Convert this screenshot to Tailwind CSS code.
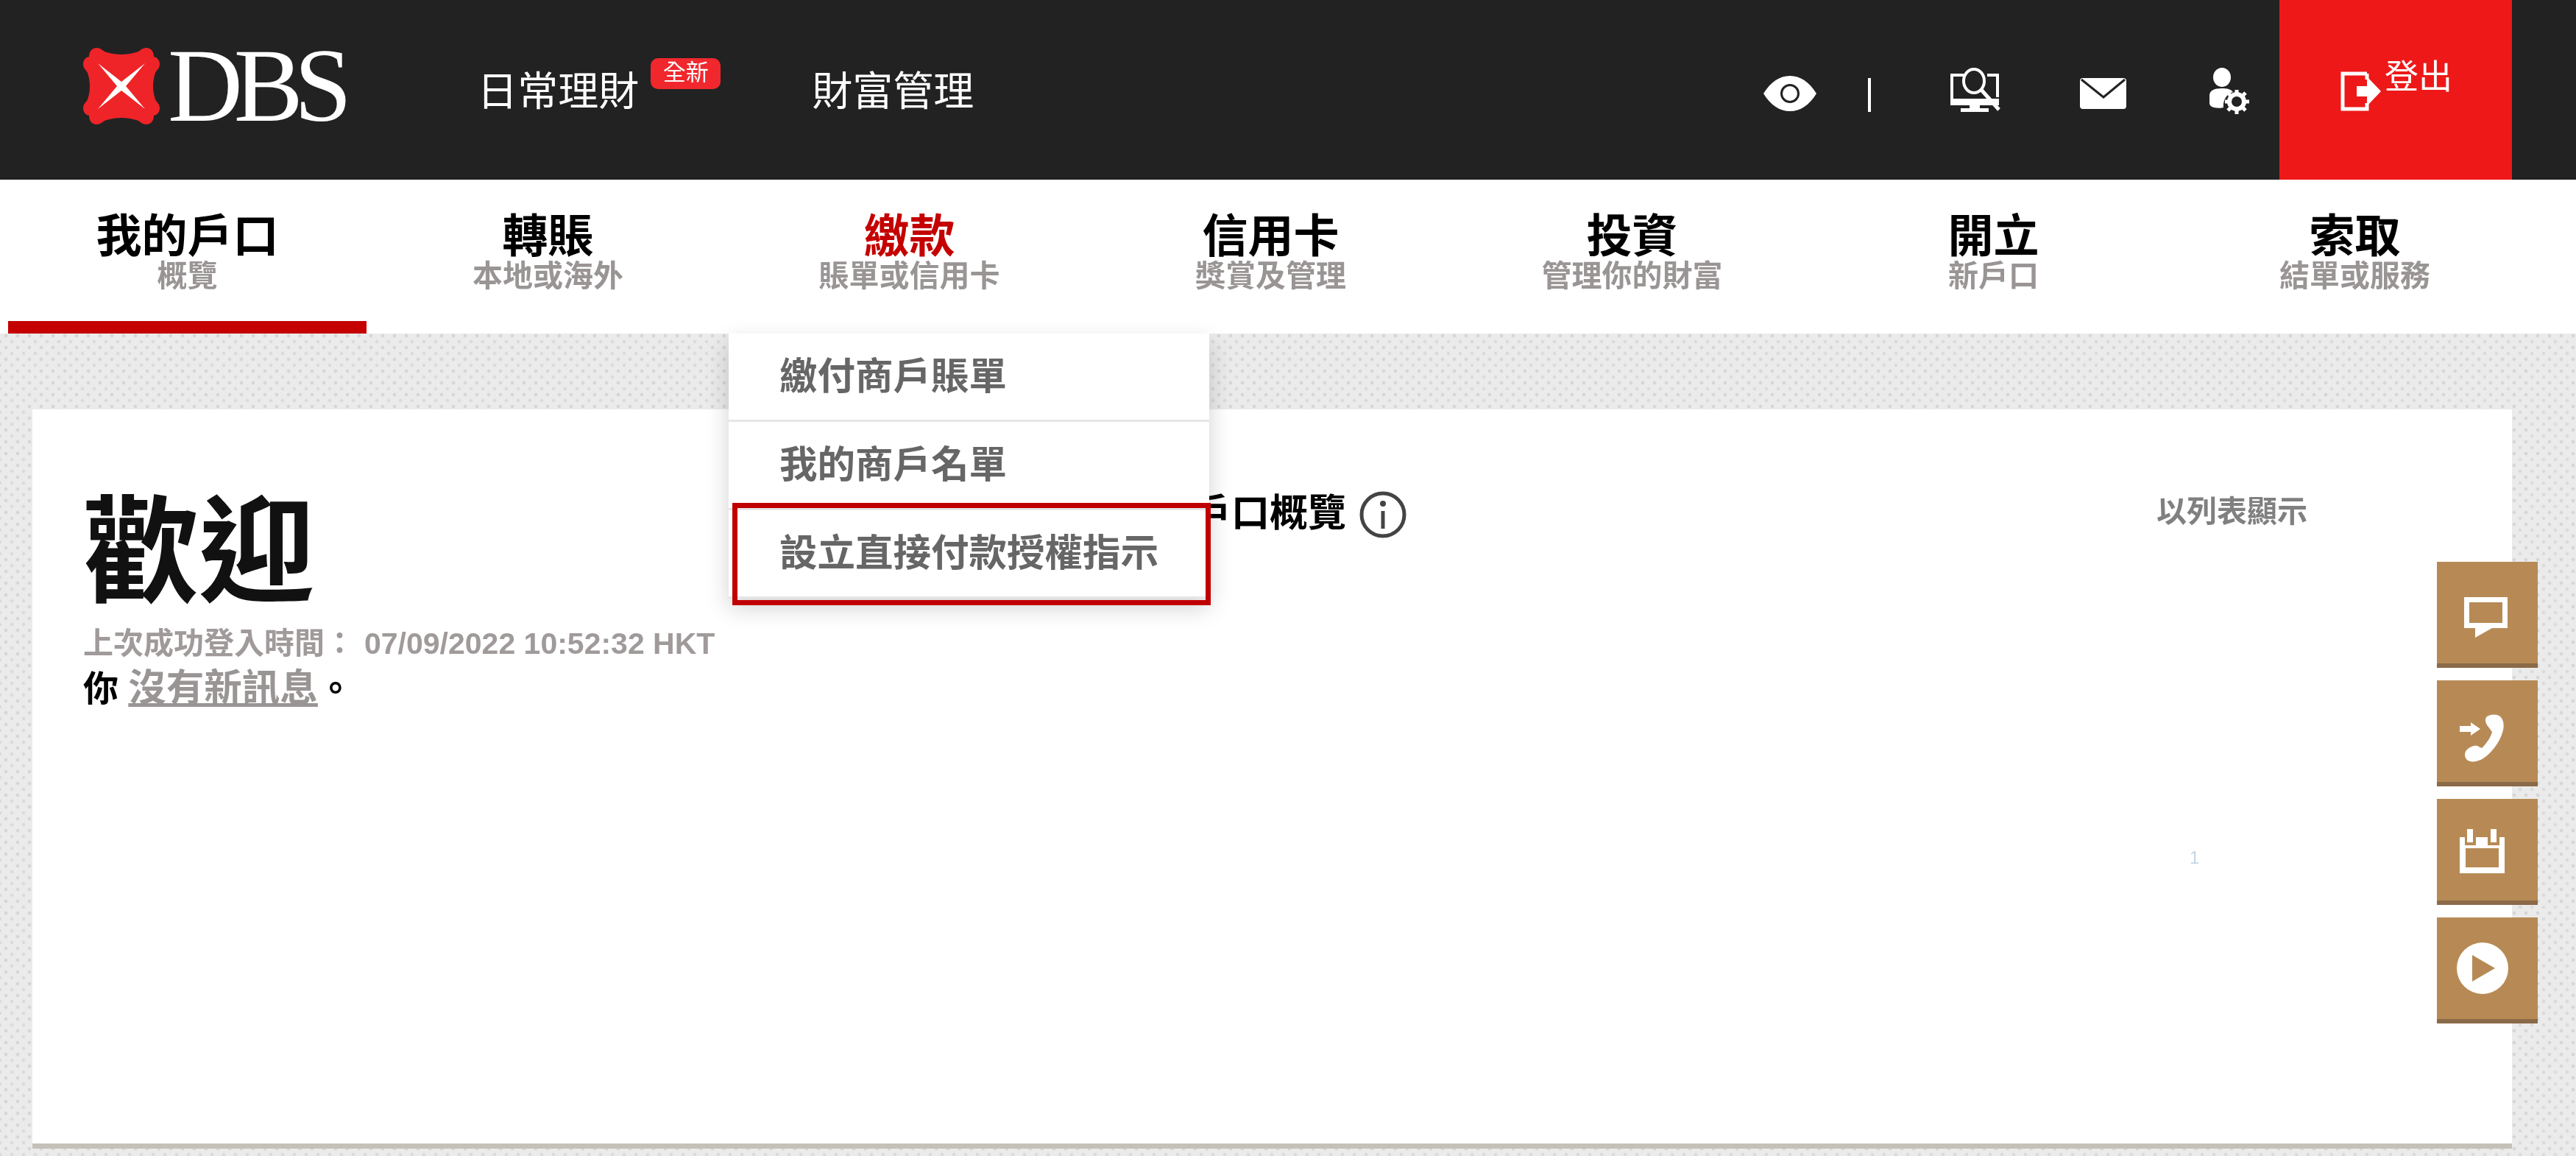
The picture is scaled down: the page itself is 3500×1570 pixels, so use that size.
<!DOCTYPE html>
<html lang="zh-Hant">
<head>
  <meta charset="UTF-8">
  <title>DBS</title>
  <script src="https://cdn.jsdelivr.net/npm/@tailwindcss/browser@4"></script>
</head>
<body class="font-['Liberation_Sans','Noto_Sans_CJK_TC',sans-serif]">
<div class="relative w-[3500px] h-[1570px] overflow-hidden flex flex-col bg-[#ebebeb] bg-[radial-gradient(#d5d5d5_1.5px,transparent_3px),radial-gradient(#dadada_1.5px,transparent_3px)] bg-[length:16px_16px] bg-[position:0_0,8px_8px] blur-[0.7px]">

  <!-- Top bar -->
  <header class="h-[244px] shrink-0 bg-[#222222] flex items-stretch text-white">
    <a class="ml-[113px] mt-[65px] h-[104px] flex items-start">
      <svg class="w-[104px] h-[104px]" viewBox="0 0 104 104">
        <path fill="#ee2428" d="M18 0c7 0 9 5 14 6 13 4 27 4 40 0 5-1 7-6 14-6 6 0 10 5 10 12 5 1 8 5 8 10 0 6-4 8-6 12-4 12-4 24 0 36 2 4 6 6 6 12 0 5-3 9-8 10 0 7-4 12-10 12-7 0-9-5-14-6-13-4-27-4-40 0-5 1-7 6-14 6-6 0-10-5-10-12-5-1-8-5-8-10 0-6 4-8 6-12 4-12 4-24 0-36-2-4-6-6-6-12 0-5 3-9 8-10 0-7 4-12 10-12z"/>
        <path fill="#fff" d="M20 21 52 46 84 21 58 52 84 83 52 58 20 83 46 52z"/>
      </svg>
      <span class="ml-[11px] mt-[-24px] font-['Liberation_Serif',serif] text-[141px] leading-[150px] tracking-[-12px]">DBS</span>
    </a>
    <nav class="flex items-start text-[55px] leading-[60px]">
      <a class="ml-[182px] mt-[94px]">日常理財</a>
      <span class="ml-[16px] mt-[79px] w-[95px] h-[42px] rounded-[10px] bg-[#f0282d] text-[31px] leading-[40px] text-center">全新</span>
      <a class="ml-[124px] mt-[94px]">財富管理</a>
    </nav>
    <div class="ml-auto flex items-start">
      <!-- eye -->
      <svg class="mt-[103px] w-[72px] h-[48px]" viewBox="0 0 72 48">
        <path fill="#fff" fill-rule="evenodd" d="M0 24C10 8 22 0 36 0s26 8 36 24C62 40 50 48 36 48S10 40 0 24zM36 11a13 13 0 1 0 0 26a13 13 0 0 0 0-26z"/>
        <circle cx="36" cy="24" r="10" fill="#fff"/>
      </svg>
      <div class="ml-[70px] mt-[106px] w-[4px] h-[46px] bg-white"></div>
      <!-- monitor search -->
      <svg class="ml-[108px] mt-[92px] w-[69px] h-[60px]" viewBox="0 0 69 60" fill="none">
        <path stroke="#fff" stroke-width="4" d="M18 10H2v34h48M50 10h14v30"/>
        <path fill="#fff" d="M0 42h66v9H0zM26 51h14v4H26zM14 55h38v5H14z"/>
        <ellipse cx="32" cy="18" rx="14" ry="16" stroke="#fff" stroke-width="4"/>
        <path stroke="#fff" stroke-width="5" d="M42 30l24 27"/>
      </svg>
      <!-- mail -->
      <svg class="ml-[107px] mt-[106px] w-[63px] h-[42px]" viewBox="0 0 63 42">
        <rect width="63" height="42" rx="4" fill="#fff"/>
        <path d="M2 2l30 24L61 2" fill="none" stroke="#222" stroke-width="3"/>
      </svg>
      <!-- user settings -->
      <svg class="ml-[111px] mt-[92px] w-[56px] h-[63px]" viewBox="0 0 56 63">
        <ellipse cx="19" cy="13" rx="12" ry="13" fill="#fff"/>
        <path fill="#fff" d="M2 38c0-7 6-10 17-10 7 0 12 1 15 5-9 3-14 11-13 21-3 1-8 1-13 0-4-1-6-3-6-6z"/>
        <circle cx="39" cy="46" r="10" fill="none" stroke="#fff" stroke-width="6"/>
        <path stroke="#fff" stroke-width="5" d="M39 30v7M39 55v8M23 46h7M48 46h8M27 34l6 6M45 52l6 6M51 34l-6 6M33 52l-6 6"/>
      </svg>
      <!-- logout -->
      <a class="self-stretch ml-[41px] mr-[87px] w-[316px] bg-[#ee1818] flex items-start pl-[83px]">
        <svg class="mt-[97px] w-[55px] h-[54px]" viewBox="0 0 55 54">
          <path fill="none" stroke="#fff" stroke-width="5" d="M36 3H3v48h33v-8M36 3v8"/>
          <path fill="#fff" d="M22 20h14V7l19 20-19 20V34H22z"/>
        </svg>
        <span class="ml-[5px] mt-[77px] text-[46px] leading-[54px]">登出</span>
      </a>
    </div>
  </header>

  <!-- Main nav -->
  <nav class="h-[209px] shrink-0 bg-white pl-[8px]">
    <div class="grid grid-cols-7 w-[3437px] h-full text-center font-bold">
      <a class="pt-[46px] ml-[3px] mr-[1px] border-b-[17px] border-[#c40000]">
        <p class="text-[62px] leading-[64px] text-black">我的戶口</p>
        <p class="text-[41px] leading-[42px] text-[#9a9595]">概覽</p>
      </a>
      <a class="pt-[46px]">
        <p class="text-[62px] leading-[64px] text-black">轉賬</p>
        <p class="text-[41px] leading-[42px] text-[#9a9595]">本地或海外</p>
      </a>
      <a class="pt-[46px]">
        <p class="text-[62px] leading-[64px] text-[#c40000]">繳款</p>
        <p class="text-[41px] leading-[42px] text-[#9a9595]">賬單或信用卡</p>
      </a>
      <a class="pt-[46px]">
        <p class="text-[62px] leading-[64px] text-black">信用卡</p>
        <p class="text-[41px] leading-[42px] text-[#9a9595]">獎賞及管理</p>
      </a>
      <a class="pt-[46px]">
        <p class="text-[62px] leading-[64px] text-black">投資</p>
        <p class="text-[41px] leading-[42px] text-[#9a9595]">管理你的財富</p>
      </a>
      <a class="pt-[46px]">
        <p class="text-[62px] leading-[64px] text-black">開立</p>
        <p class="text-[41px] leading-[42px] text-[#9a9595]">新戶口</p>
      </a>
      <a class="pt-[46px]">
        <p class="text-[62px] leading-[64px] text-black">索取</p>
        <p class="text-[41px] leading-[42px] text-[#9a9595]">結單或服務</p>
      </a>
    </div>
  </nav>

  <!-- Content -->
  <main class="pt-[103px] pl-[44px] pr-[87px]">
    <section class="h-[1004px] bg-white border-b-[7px] border-[#c5c1b8] flex">
      <div class="w-[1577px] pl-[69px] pt-[100px] font-bold">
        <h1 class="text-[157px] leading-[190px] text-[#111]">歡迎</h1>
        <p class="text-[41px] leading-[48px] text-[#a09a9a] whitespace-nowrap">上次成功登入時間<span class="font-['Noto_Sans_CJK_SC',sans-serif]">：</span><span class="ml-[13px]">07/09/2022 10:52:32 HKT</span></p>
        <p class="mt-[2px] text-[48px] leading-[62px] text-black">你 <a class="text-[51.5px] text-[#9a9595] underline">沒有新訊息</a><span class="font-['Noto_Sans_CJK_SC',sans-serif]">。</span></p>
      </div>
      <div class="flex-1 relative pt-[110px] font-bold flex items-start">
        <h2 class="text-[52px] leading-[62px] text-black">戶口概覽</h2>
        <svg class="ml-[18px] mt-[1px] w-[64px] h-[64px]" viewBox="0 0 64 64" fill="none">
          <circle cx="32" cy="32" r="29" stroke="#444" stroke-width="5"/>
          <circle cx="32" cy="17" r="4" fill="#444"/>
          <path stroke="#444" stroke-width="5" d="M32 27v24"/>
        </svg>
        <a class="ml-auto mr-[278px] mt-[4px] text-[41px] leading-[50px] text-[#808080]">以列表顯示</a>
      </div>
    </section>
  </main>

  <span class="absolute left-[2975px] top-[1150px] text-[24px] leading-[30px] text-[#c5d5e8]">1</span>

  <!-- Dropdown under 繳款 -->
  <div class="absolute left-[990px] top-[453px] w-[653px] bg-white shadow-[0_12px_30px_rgba(0,0,0,0.18)] text-[51.5px] font-bold text-[#666]">
    <a class="block h-[120px] pl-[69px] pt-[27px] leading-[62px] border-b-[3px] border-[#e6e6e6]">繳付商戶賬單</a>
    <a class="block h-[120px] pl-[69px] pt-[27px] leading-[62px] border-b-[3px] border-[#e6e6e6]">我的商戶名單</a>
    <a class="block h-[120px] pl-[69px] pt-[27px] leading-[62px] border-b-[3px] border-[#e6e6e6]">設立直接付款授權指示</a>
  </div>
  <div class="absolute left-[995px] top-[683px] w-[650px] h-[139px] border-[7px] border-[#c00000]"></div>

  <!-- Floating shortcuts -->
  <aside class="absolute left-[3311px] top-[763px] flex flex-col gap-[17px]">
    <a class="w-[137px] h-[144px] bg-[#b78a55] border-b-[6px] border-[#8a6a48] pl-[37px] pt-[48px]">
      <svg class="w-[59px] h-[55px]" viewBox="0 0 59 55">
        <path fill="#fff" fill-rule="evenodd" d="M0 0h59v42H38L15 55V42H0zM7 7v28h45V7z"/>
      </svg>
    </a>
    <a class="w-[137px] h-[144px] bg-[#b78a55] border-b-[6px] border-[#8a6a48] pl-[31px] pt-[46px]">
      <svg class="w-[60px] h-[65px]" viewBox="0 0 60 65">
        <path fill="#fff" d="M0 16h15v-5l13 9-13 9v-5H0z"/>
        <path fill="#fff" d="M36 4C40 0 50-1 55 3c5 5 6 13 3 22-4 13-14 27-26 35-8 5-18 6-22 2-4-4-4-10 0-14 4-4 10-6 14-5l6 3c6-6 12-14 14-22l-6-8c-3-4-4-8-2-12z"/>
      </svg>
    </a>
    <a class="w-[137px] h-[144px] bg-[#b78a55] border-b-[6px] border-[#8a6a48] pl-[31px] pt-[41px]">
      <svg class="w-[61px] h-[60px]" viewBox="0 0 61 60">
        <path fill="#fff" fill-rule="evenodd" d="M0 11h7v11h47V11h7v49H0zM8 26v26h45V26z"/>
        <path fill="#fff" d="M10 0h8v18h-8zM42 0h8v18h-8zM22 11h16v11H22z"/>
      </svg>
    </a>
    <a class="w-[137px] h-[144px] bg-[#b78a55] border-b-[6px] border-[#8a6a48] pl-[27px] pt-[34px]">
      <svg class="w-[70px] h-[70px]" viewBox="0 0 70 70">
        <path fill="#fff" fill-rule="evenodd" d="M35 0a35 35 0 1 0 0 70a35 35 0 0 0 0-70zM21 17l31 18-31 18z"/>
      </svg>
    </a>
  </aside>
</div>
</body>
</html>
